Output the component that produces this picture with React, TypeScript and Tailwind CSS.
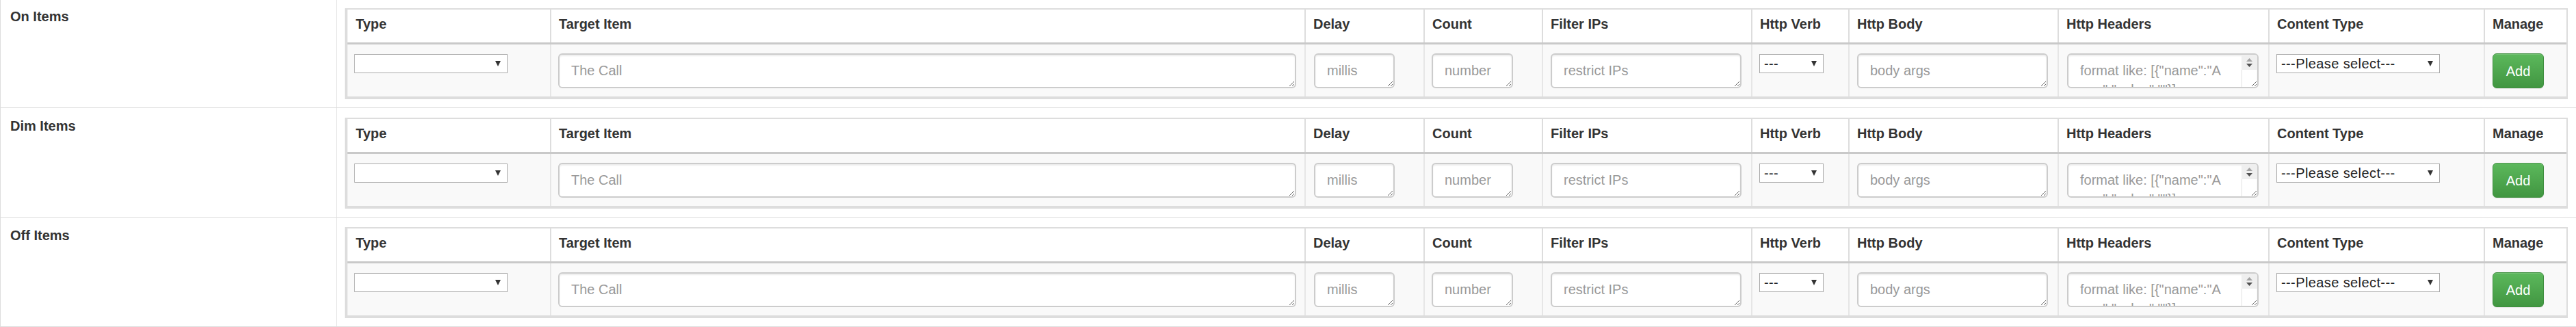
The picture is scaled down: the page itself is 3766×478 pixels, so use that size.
const sections = ['On Items', 'Dim Items', 'Off Items']

const headers = [
  'Type',
  'Target Item',
  'Delay',
  'Count',
  'Filter IPs',
  'Http Verb',
  'Http Body',
  'Http Headers',
  'Content Type',
  'Manage',
]

const SelectBox = ({ width, label }: { width: string; label?: string }) => (
  <div
    className={`mt-px flex h-[28px] items-center justify-between border border-[#a9a9a9] bg-white pl-[6px] pr-[9px] text-[20px] leading-[26px] tracking-[0.4px] text-[#222] ${width}`}
  >
    <span className="whitespace-pre">{label ?? ''}</span>
    <svg width="8" height="8" viewBox="0 0 8 8" className="shrink-0">
      <path d="M0 0 L8 0 L4 8 Z" fill="#333" />
    </svg>
  </div>
)

const Area = ({ width, placeholder }: { width: string; placeholder: string }) => (
  <textarea
    readOnly
    placeholder={placeholder}
    className={`block h-[51px] rounded-[6px] border-2 border-[#ccc] bg-white px-[17px] py-[9px] text-[20px] leading-[28px] text-[#555] shadow-[inset_0_2px_2px_rgba(0,0,0,0.075)] outline-none placeholder:text-[#999] ${width}`}
  />
)

const HeadersArea = () => (
  <div className="relative w-[280px]">
    <textarea
      readOnly
      placeholder={'format like: [{"name":"A\n      ","value":""}]'}
      className="block h-[51px] w-full overflow-hidden rounded-[6px] border-2 border-[#ccc] bg-white py-[9px] pl-[17px] pr-[30px] text-[20px] leading-[28px] text-[#555] shadow-[inset_0_2px_2px_rgba(0,0,0,0.075)] outline-none placeholder:text-[#999]"
    />
    <div className="absolute right-[2px] top-[2px] flex h-[22px] w-[23px] flex-col items-center justify-center gap-[3px] rounded-tr-[4px] bg-[#efefef]">
      <svg width="9" height="5" viewBox="0 0 9 5">
        <path d="M0 5 L4.5 0 L9 5 Z" fill="#a3a3a3" />
      </svg>
      <svg width="9" height="5" viewBox="0 0 9 5">
        <path d="M0 0 L9 0 L4.5 5 Z" fill="#505050" />
      </svg>
    </div>
    <div className="absolute bottom-[2px] right-[24px] top-[24px] w-px bg-[#e2e2e2]" />
  </div>
)

const cellPad = [
  'pl-[10px]',
  'pl-[10px]',
  'pl-[12px]',
  'pl-[10px]',
  'pl-[11px]',
  'pl-[10px]',
  'pl-[11px]',
  'pl-[12px]',
  'pl-[10px]',
  'pl-[11px]',
]

const ItemsTable = () => {
  const inputs = [
    <SelectBox key="type" width="w-[224px]" />,
    <Area key="target" width="w-[1079px]" placeholder="The Call" />,
    <Area key="delay" width="w-[118px]" placeholder="millis" />,
    <Area key="count" width="w-[119px]" placeholder="number" />,
    <Area key="ips" width="w-[279px]" placeholder="restrict IPs" />,
    <SelectBox key="verb" width="w-[94px]" label="---" />,
    <Area key="body" width="w-[279px]" placeholder="body args" />,
    <HeadersArea key="headers" />,
    <SelectBox key="content" width="w-[239px]" label="---Please select---" />,
    <button
      key="add"
      type="button"
      className="h-[51px] w-[75px] rounded-[6px] border border-[#3e8f3e] bg-linear-to-b from-[#5cb85c] to-[#419641] text-[20px] leading-[28px] text-white shadow-[inset_0_1px_0_rgba(255,255,255,0.15),0_1px_1px_rgba(0,0,0,0.075)]"
    >
      Add
    </button>,
  ]

  return (
    <div className="w-[3250px] border-b-4 border-l-4 border-r-2 border-t-2 border-[#ddd]">
      <div className="grid grid-cols-[296px_1103px_174px_173px_306px_142px_306px_308px_315px_121px]">
        {headers.map((title, i) => (
          <div
            key={title}
            className={`h-[48px] bg-white pt-[7px] font-bold ${i === 0 ? 'pl-[12px]' : 'border-l-2 border-[#ddd] pl-[11px]'}`}
          >
            {title}
          </div>
        ))}
      </div>
      <div className="h-[3px] bg-[#c9c9c9]" />
      <div className="grid grid-cols-[296px_1103px_174px_173px_306px_142px_306px_308px_315px_121px]">
        {inputs.map((input, i) => (
          <div
            key={i}
            className={`h-[76px] bg-[#f9f9f9] pt-[13px] ${cellPad[i]} ${i === 0 ? '' : 'border-l-2 border-[#e6e6e6]'}`}
          >
            {input}
          </div>
        ))}
      </div>
    </div>
  )
}

const App = () => {
  return (
    <div className="h-[478px] w-[3766px] overflow-hidden bg-white font-['Liberation_Sans',Arial,sans-serif] text-[20px] leading-[28px] text-[#333]">
      <div className="-mt-[3px]">
        {sections.map((label, i) => (
          <div
            key={label}
            className={`flex border-t border-[#ddd] ${i === sections.length - 1 ? 'h-[161px] border-b' : 'h-[160px]'}`}
          >
            <div className="w-[492px] shrink-0 border-l border-r border-[#ddd] pl-[14px] pt-[12px] font-bold">
              {label}
            </div>
            <div className="flex-1 pl-[12px] pt-[14px]">
              <ItemsTable />
            </div>
          </div>
        ))}
      </div>
    </div>
  )
}

export default App
